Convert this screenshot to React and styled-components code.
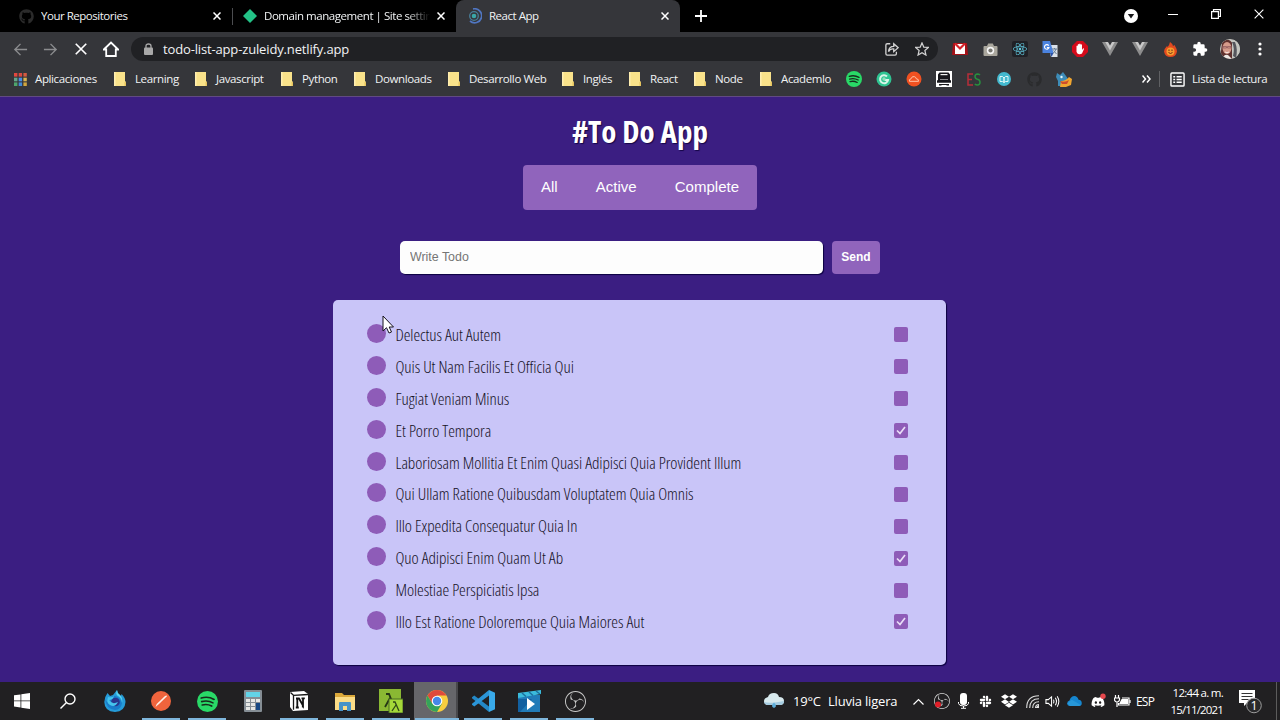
import React from "react";
import styled, { createGlobalStyle, css } from "styled-components";
import { FaGithub, FaReact, FaSlack, FaDropbox, FaDiscord } from "react-icons/fa6";
import { SiObsstudio } from "react-icons/si";

const Global = createGlobalStyle`
  * { box-sizing: border-box; }
  html, body { margin: 0; padding: 0; overflow: hidden; }
  body { font-family: "Open Sans", "Noto Sans", sans-serif; }
  svg { display: block; flex: none; }
`;

const Screen = styled.div`
  width: 1280px;
  height: 720px;
  display: flex;
  flex-direction: column;
  overflow: hidden;
  color: #fff;
`;

/* ---------- browser chrome ---------- */
const TabStrip = styled.div`
  height: 32px;
  flex: none;
  display: flex;
  background: #000;
`;

const Tab = styled.div`
  width: ${(p) => p.$w}px;
  height: 32px;
  display: flex;
  align-items: center;
  padding: 0 11px 0 ${(p) => p.$pad}px;
  gap: 7px;
  ${(p) =>
    p.$active &&
    css`
      background: #35363a;
      border-radius: 8px 8px 0 0;
    `}
`;

const TabTitle = styled.span`
  flex: 1;
  font-size: 11.5px;
  letter-spacing: ${(p) => (p.$fade ? -0.45 : -0.48)}px;
  line-height: 16px;
  white-space: nowrap;
  overflow: hidden;
  color: #f1f3f4;
  ${(p) => p.$fade && css`
    mask-image: linear-gradient(90deg, #000 86%, transparent);
  `}
`;

const TabDivider = styled.div`
  width: 1px;
  height: 17px;
  margin-top: 8px;
  background: #4c4d50;
`;

const NewTab = styled.div`
  width: 42px;
  display: grid;
  place-items: center;
`;

const WindowButtons = styled.div`
  margin-left: auto;
  display: flex;
  height: 27px;
`;

const WindowButton = styled.div`
  width: ${(p) => p.$w || 43}px;
  padding-top: ${(p) => p.$top || 0}px;
  display: grid;
  place-items: center;
`;

const Toolbar = styled.div`
  height: 33px;
  flex: none;
  display: flex;
  align-items: center;
  background: #35363a;
  padding: 1px 0 0 5px;
`;

const Slot = styled.div`
  width: ${(p) => p.$w || 30}px;
  height: 28px;
  margin-left: ${(p) => p.$ml || 0}px;
  flex: none;
  display: grid;
  place-items: center;
`;

const AddressBar = styled.div`
  width: 807px;
  height: 24px;
  margin: 0 7px 0 6px;
  flex: none;
  display: flex;
  align-items: center;
  border-radius: 12px;
  background: #202124;
  padding: 0 1px 0 13px;
`;

const Url = styled.span`
  flex: 1;
  margin-left: 10px;
  font-size: 13px;
  line-height: 20px;
  letter-spacing: -0.15px;
  color: #f1f3f4;
`;

const Bookmarks = styled.div`
  height: 31px;
  flex: none;
  display: flex;
  align-items: center;
  padding: 0 0 3px 14px;
  background: #35363a;
`;

const Bookmark = styled.div`
  width: ${(p) => p.$w}px;
  flex: none;
  display: flex;
  align-items: center;
  gap: ${(p) => p.$gap || 9}px;
  font-size: 11.5px;
  letter-spacing: -0.38px;
  line-height: 16px;
  white-space: nowrap;
  color: #f1f3f4;
`;

const Divider = styled.div`
  width: 1px;
  height: 16px;
  margin-right: 10px;
  background: #5f6063;
`;

/* ---------- to-do page ---------- */
const Page = styled.main`
  height: 586px;
  flex: none;
  display: flex;
  flex-direction: column;
  align-items: center;
  background: #3b1e82;
  border-top: 1px solid #614a83;
`;

const Title = styled.h1`
  margin: 12px 0 0;
  height: 44px;
  font-family: "Open Sans", sans-serif;
  font-size: 31px;
  line-height: 44px;
  font-weight: 700;
  font-stretch: 75%;
  letter-spacing: 0.1px;
  text-shadow: 1px 1px 1px #150647;
  white-space: nowrap;
`;

const Filters = styled.nav`
  width: 234px;
  height: 45px;
  margin-top: 12px;
  padding: 0 18px 2px;
  display: flex;
  align-items: center;
  justify-content: space-between;
  border-radius: 4px;
  background: #9064bc;
  font: 15px "Liberation Sans", Arial, sans-serif;
`;

const Form = styled.div`
  width: 480px;
  height: 33px;
  margin-top: 31px;
  display: flex;
  gap: 9px;
`;

const Field = styled.input`
  width: 423px;
  height: 33px;
  padding: 0 10px 1px;
  border: 0;
  border-radius: 5px;
  background: #fdfdfd;
  box-shadow: 1px 1px 1px #0c0040;
  font: 12.4px "Liberation Sans", Arial, sans-serif;
  &::placeholder { color: #757575; opacity: 1; }
`;

const Send = styled.button`
  width: 48px;
  height: 33px;
  padding: 0 0 1px;
  border: 0;
  border-radius: 4px;
  background: #9064bc;
  color: #fff;
  font: bold 12px "Liberation Sans", Arial, sans-serif;
`;

const List = styled.ul`
  width: 613px;
  height: 365px;
  margin: 26px 1px 0 0;
  padding: 19px 38px 0 34px;
  list-style: none;
  border-radius: 5px;
  background: #c9c5f8;
  box-shadow: 1px 1px 1px #0c0040;
`;

const Item = styled.li`
  height: 31.9px;
  display: flex;
  align-items: center;
  font-family: "Open Sans", sans-serif;
  font-size: 17px;
  font-stretch: 75%;
  font-weight: 300;
  letter-spacing: -0.08px;
  color: #161226;
  white-space: nowrap;
`;

const Dot = styled.span`
  width: 19px;
  height: 19px;
  margin: 0 9.5px 3px 0;
  border-radius: 50%;
  background: #8e5cb8;
`;

const Task = styled.span`
  flex: 1;
  line-height: 24px;
`;

const Check = styled.span`
  width: 14px;
  height: 15px;
  display: grid;
  place-items: center;
  border-radius: 2px;
  background: #8e5cb8;
`;

const Pointer = styled.svg`
  position: absolute;
  left: 382px;
  top: 315px;
`;

/* ---------- taskbar ---------- */
const Taskbar = styled.footer`
  height: 38px;
  flex: none;
  display: flex;
  background: #212022;
`;

const StartArea = styled.div`
  width: 92px;
  height: 38px;
  padding-left: 14px;
  display: flex;
  align-items: center;
  gap: 30px;
`;

const AppButton = styled.div`
  width: 46px;
  height: 38px;
  display: flex;
  flex-direction: column;
  align-items: center;
  justify-content: space-between;
  padding-top: 7px;
  ${(p) => p.$active && css`
    background: linear-gradient(90deg, #66666a 0 42px, #48484b 42px 44px, transparent 44px);
  `}
`;

const Glyph = styled.div`
  height: 24px;
  display: grid;
  place-items: center;
`;

const Underline = styled.div`
  width: ${(p) => (p.$wide ? 44 : 38)}px;
  height: 2px;
  background: #7fb6dc;
  visibility: ${(p) => (p.$on ? "visible" : "hidden")};
`;

const Tray = styled.div`
  margin-left: auto;
  display: flex;
  align-items: center;
`;

const TrayText = styled.span`
  width: ${(p) => p.$w}px;
  font-size: ${(p) => p.$size || 13}px;
  letter-spacing: ${(p) => p.$ls || 0}px;
  white-space: nowrap;
`;

const Clock = styled.div`
  width: 60px;
  font-size: 11.5px;
  line-height: 17px;
  letter-spacing: ${(p) => p.$ls}px;
  text-align: right;
  white-space: nowrap;
`;

const ShowDesktop = styled.div`
  width: 4px;
  height: 38px;
  border-left: 1px solid #5c5c5c;
`;

/* ---------- icons ---------- */
const Line = ({ size = 16, w = 1.5, color = "#fff", children }) => (
  <svg width={size} height={size} viewBox="0 0 16 16" fill="none" stroke={color} strokeWidth={w}>
    {children}
  </svg>
);
const Cross = ({ size = 8, w = 1.5 }) => (
  <svg width={size} height={size} viewBox="0 0 8 8" stroke="#fff" strokeWidth={w}>
    <path d="M.5.5 7.5 7.5M7.5.5.5 7.5" />
  </svg>
);
const Folder = () => (
  <svg width="12" height="14" viewBox="0 0 12 14">
    <path d="M0 0h11v9l1 1v4H0z" fill="#f9e28a" />
    <path d="M0 0h1.500v14H0z" fill="#ffeeb0" />
    <path d="M10.500 10h1.500v4h-1.500z" fill="#e5c35e" />
  </svg>
);
const Apps = () => (
  <svg width="13" height="13" viewBox="0 0 13 13">
    {["#e2483f", "#d94a40", "#d35a3f", "#62a78a", "#4a8ee0", "#d8b450", "#4ea56c", "#4289d6", "#d0a63e"].map((c, i) => (
      <rect key={i} x={(i % 3) * 4.7} y={Math.floor(i / 3) * 4.7} width="3.4" height="3.6" fill={c} />
    ))}
  </svg>
);
const Vue = () => (
  <svg width="16" height="14" viewBox="0 0 16 14">
    <path d="M0 0h4l4 7 4-7h4L8 14z" fill="#8d8d8d" />
    <path d="M3.200 0H6l2 3.500L10 0h2.800L8 8.500z" fill="#c9c9c9" />
  </svg>
);
const Gmail = () => (
  <svg width="16" height="14" viewBox="0 0 16 14">
    <path d="M1 1h14l1 12H0z" fill="#a51218" />
    <path d="M3 2h10v10H3z" fill="#fff" />
    <path d="M3 1.500 8 6.500l5-5" fill="none" stroke="#d8232a" strokeWidth="2.200" />
  </svg>
);
const Camera = () => (
  <svg width="15" height="13" viewBox="0 0 15 13">
    <path d="M1.500 3H4l1.200-2.500h4.600L11 3h2.500q1 0 1 1v8q0 1-1 1h-12q-1 0-1-1V4q0-1 1-1z" fill="#aaa79d" />
    <circle cx="7.500" cy="7.500" r="3.700" fill="#f5f5f5" />
    <circle cx="7.500" cy="7.500" r="2.100" fill="#77766f" />
  </svg>
);
const ReactBadge = () => (
  <svg width="16" height="16" viewBox="0 0 16 16">
    <rect width="16" height="16" rx="2" fill="#202126" />
    <FaReact x="1" y="1" size={14} color="#61c8df" />
  </svg>
);
const Translate = () => (
  <svg width="16" height="16" viewBox="0 0 16 16">
    <path d="M6 4h9.500v12H9z" fill="#dbe1e8" />
    <path d="M.5 0H8l3.500 12H.5z" fill="#4b83df" />
    <path d="M6.700 4.600a2.300 2.300 0 1 0 .3 2H4.900" fill="none" stroke="#fff" strokeWidth="1.100" />
    <path d="M10 8h5M12.500 7v1M14 8q-.8 3-3.300 4.500M11.500 9.500l3 3.500" fill="none" stroke="#667b91" />
    <path d="m8 12 1.500 4 2-4z" fill="#2951a5" />
  </svg>
);
const Adblock = () => (
  <svg width="16" height="16" viewBox="0 0 16 16">
    <path d="M5 0h6l5 5v6l-5 5H5l-5-5V5z" fill="#d50b1b" />
    <path d="M4.500 8V5q.7-.8 1.300 0V3.500q.7-.8 1.400 0V3q.7-.8 1.400 0v.7q.8-.7 1.400 0V9l1-1.500q1-.4 1 .4L10 12.500q-1 1-3 .8-2-.3-2.500-2.500z" fill="#fff" />
  </svg>
);
const Fire = () => (
  <svg width="13" height="15" viewBox="0 0 13 15">
    <path d="M6 0q3 2 3 4l1.500-1Q13 7 13 9.500 12 15 6.500 15T0 9.500Q0 7 3 4l.5 1Q5.500 3 6 0z" fill="#e1491f" />
    <circle cx="6.500" cy="9.500" r="4" fill="#f79b2e" />
    <path d="M5 7.500v1.500M8 7.500v1.500M4.500 10.500q2 2 4 0" stroke="#64301a" fill="none" />
  </svg>
);
const Puzzle = () => (
  <svg width="16" height="16" viewBox="0 0 24 24">
    <path fill="#fff" d="M20.500 11H19V7a2 2 0 0 0-2-2h-4V3.500a2.500 2.500 0 0 0-5 0V5H4a2 2 0 0 0-2 2v3.800h1.500a2.700 2.700 0 0 1 0 5.400H2V20a2 2 0 0 0 2 2h3.800v-1.500a2.700 2.700 0 0 1 5.400 0V22H17a2 2 0 0 0 2-2v-4h1.500a2.500 2.500 0 0 0 0-5z" />
  </svg>
);
const Avatar = () => (
  <svg width="20" height="20" viewBox="0 0 20 20">
    <defs><clipPath id="face"><circle cx="10" cy="10" r="10" /></clipPath></defs>
    <g clipPath="url(#face)">
      <path d="M0 0h20v20H0z" fill="#c9c8c2" />
      <path d="M2 4Q8-3 13 5v15H0z" fill="#5d312e" />
      <path d="M12 1h8v19h-8z" fill="#c4c5bf" />
      <path d="M12 3q3 6 1 14l3 2q2-9-1-16z" fill="#55565c" />
      <ellipse cx="7" cy="9" rx="4.500" ry="6" fill="#d69b8b" />
      <path d="M3 7.500h3.500v1.500H3zM7.500 7.500H11v1.500H7.500z" fill="none" stroke="#8a5357" strokeWidth=".7" />
      <path d="M5 13q2 1.500 4 0" stroke="#f5e6e0" fill="none" />
      <path d="M2 20q2-5 6-4l4 4z" fill="#ece8e4" />
    </g>
  </svg>
);
const Spotify = ({ size }) => (
  <svg width={size} height={size} viewBox="0 0 20 20">
    <circle cx="10" cy="10" r="10" fill="#29d967" />
    <path d="M4 6.700q6.500-2 12.300 1.300M4.500 10.100q5.700-1.600 10.700 1.200M5 13.300q4.800-1.300 9 1" fill="none" stroke="#182b1c" strokeWidth="1.600" strokeLinecap="round" />
  </svg>
);
const GreenG = () => (
  <svg width="16" height="16" viewBox="0 0 16 16">
    <circle cx="8" cy="8" r="7.500" fill="#2fc492" />
    <path d="M11 5.500A4 4 0 1 0 12 9H8.500" fill="none" stroke="#d9f6e9" strokeWidth="2" />
    <circle cx="8" cy="8" r="1.700" fill="#8ee2bd" />
  </svg>
);
const OrangeCloud = () => (
  <svg width="16" height="16" viewBox="0 0 16 16">
    <circle cx="8" cy="8" r="7.500" fill="#f15121" />
    <path d="M3.500 10.300q-1-2 1.500-2.500 1-3 3.500-2.100 1.500.4 1.800 2.100 2.500 0 2.200 2.500z" fill="none" stroke="#ffc7ad" />
  </svg>
);
const Robot = () => (
  <svg width="16" height="16" viewBox="0 0 16 16">
    <path d="M0 0h16v16H0z" fill="#fff" />
    <path d="M3.500 1.500h9l1.500 2V9l1 .5v2.300H1V9.500L2 9V3.500z" fill="#17171c" />
    <path d="M4.500 3h7v1.200h-7z" fill="#eee" />
    <path d="M4 8.500h8" stroke="#8a8a8e" />
    <path d="M3 13h2.500v1.500H3zM10.500 13H13v1.500h-2.500z" fill="#17171c" />
    <path d="M5 13.500h6" stroke="#17171c" />
  </svg>
);
const EsMark = () => (
  <svg width="14" height="13" viewBox="0 0 14 13" fill="none" strokeWidth="1.500">
    <path d="M6 1H1v11h5M1 6.500h4" stroke="#b62e3a" />
    <path d="M13 2Q12 1 10.500 1 8 1.200 8 3.500q0 2 2.500 2.800Q13 7 13 9.300 13 12 10.500 12 9 12 7.800 11" stroke="#288f3e" />
  </svg>
);
const BlueRound = () => (
  <svg width="14" height="14" viewBox="0 0 14 14">
    <circle cx="7" cy="7" r="7" fill="#43b9cf" />
    <path d="M3 4.500h2.500L7 6v4.500L5.500 9.500H3zM11 4.500H8.500L7 6v4.500l1.500-1H11z" stroke="#def6f6" fill="none" strokeWidth="1" />
  </svg>
);
const Bird = () => (
  <svg width="16" height="15" viewBox="0 0 16 15">
    <path d="M1 1l3 2 3-3 3 4 2 3-5 7H2V9L0 5z" fill="#3d8cb8" />
    <path d="M5 9q5 0 8-4l3 2-1 6-5 2H4z" fill="#f1a62f" />
    <path d="M4 9q5 2 9-1l-2 4H6z" fill="#cf4d2c" />
    <circle cx="5.500" cy="5" r="1.200" fill="#e5f5f6" />
  </svg>
);
const Reading = () => (
  <Line size={15} w={1.5}>
    <rect x="1" y="1" width="14" height="14" rx="1" />
    <path d="M3.500 5h2M7 5h5.500M3.500 8h2M7 8h5.500M3.500 11h2M7 11h5.500" />
  </Line>
);
const Windows = () => (
  <svg width="16" height="16" viewBox="0 0 16 16" fill="#fff">
    <path d="M0 2.300 6.500 1.400v6.100H0zM7.300 1.300 16 0v7.500H7.300zM0 8.300h6.500v6.200L0 13.600zM7.300 8.300H16V16l-8.700-1.300z" />
  </svg>
);
const Firefox = () => (
  <svg width="22" height="22" viewBox="0 0 22 22">
    <path d="M3.500 3 6 6l3-1 4-5q0 3 3 5l1 1 .5-2q4 4 4 8-.5 9.500-10.500 10Q.5 21.500.3 12 .4 7 3.500 3z" fill="#259bd9" />
    <path d="M1 9q3 6 7 3-4-2-1-5l4-1q5 1 7 7-1 7-7 7Q2 19 1 9z" fill="#197cca" />
    <path d="M13 0q0 3 3 5 3 3 2 8 0-5-4-7-3-2-1-6z" fill="#5ad4ef" />
    <circle cx="11.500" cy="12" r="4.300" fill="#29358c" />
    <path d="M4 7q4 1 6-1-1 4-5 4 3 5 9 2-3 6-8 3Q2 13 4 7z" fill="#45c4ed" />
  </svg>
);
const Postman = () => (
  <svg width="20" height="20" viewBox="0 0 20 20">
    <circle cx="10" cy="10" r="10" fill="#f0643d" />
    <path d="m4.500 16 1.200-3L14 5q2-1.200 2 .3L8 13z" fill="#fff0e8" />
  </svg>
);
const Calculator = () => (
  <svg width="18" height="22" viewBox="0 0 18 22">
    <rect width="18" height="22" rx="1" fill="#858d94" />
    <path d="M2 2h14v5H2z" fill="#62d3e8" />
    {[0, 1, 2, 3, 4, 5, 6, 7, 8].map((i) => (
      <rect key={i} x={2 + (i % 3) * 5} y={9 + Math.floor(i / 3) * 4} width="4" height="3" fill="#e6e7e5" />
    ))}
    <path d="M12 13h4v7h-4z" fill="#174783" />
  </svg>
);
const Notion = () => (
  <svg width="20" height="20" viewBox="0 0 20 20">
    <path d="m1 1 14-1 4 3v16L4 20l-3-4z" fill="#fff" />
    <path d="m1.500 1.500 3 2.800v14.500M4.500 4.300 19 3.500" fill="none" stroke="#161616" strokeWidth="1.300" />
    <path d="M7 7.500h3l4 7V7.300M8.300 7.500v9M6.800 16.500h3M12.500 7.300h3.300M13.800 14v2.500" fill="none" stroke="#111" strokeWidth="1.800" />
  </svg>
);
const Explorer = () => (
  <svg width="20" height="19" viewBox="0 0 20 19">
    <path d="M0 1h7l2 2h11v15H0z" fill="#dba83a" />
    <path d="M0 5h20v13H0z" fill="#fbdc86" />
    <path d="M4 19v-8q0-1 1-1h10q1 0 1 1v8h-4v-5H8v5z" fill="#4793c7" />
  </svg>
);
const Lambda = () => (
  <svg width="24" height="24" viewBox="0 0 24 24">
    <path d="M0 0h22v22H0z" fill="#8ab833" />
    <path d="M7 5h3l6 15M11 9 6 18" fill="none" stroke="#253715" strokeWidth="1.800" />
    <path d="M10 10h14v14H10z" fill="#a5d839" stroke="#4b6d24" />
    <path d="M14 13h2l4 9M17 16l-4 6" fill="none" stroke="#304817" strokeWidth="1.300" />
  </svg>
);
const ChromeIcon = () => (
  <svg width="22" height="22" viewBox="0 0 22 22">
    <circle cx="11" cy="11" r="11" fill="#f8cd3e" />
    <path d="M1.500 5.500A11 11 0 0 1 20.500 5.500H11L6.300 13.700z" fill="#df4a3d" />
    <path d="M1.500 5.500A11 11 0 0 0 11 22l5-8.500H6.200z" fill="#35a35b" />
    <circle cx="11" cy="11" r="5.300" fill="#fff" /><circle cx="11" cy="11" r="4.200" fill="#4688e8" />
  </svg>
);
const VsCode = () => (
  <svg width="23" height="22" viewBox="0 0 23 22">
    <path d="M0 7.300 2.300 5.500 17 16.500V22L0 8.300z" fill="#2388c7" />
    <path d="M0 14.700 2.300 16.500 17 5.500V0L0 13.700z" fill="#2b95d8" />
    <path d="m17 0 6 2.700v16.600L17 22z" fill="#39aaea" />
  </svg>
);
const Movies = () => (
  <svg width="23" height="22" viewBox="0 0 23 22">
    <path d="M0 5h22v17H0z" fill="#217bb8" />
    <path d="M0 3 23 0v4L0 8z" fill="#3bbbdc" />
    <path d="m4 3 4 3.500M11 2l4 3.500M18 1l4 3" stroke="#1b6f9e" strokeWidth="1.500" />
    <path d="M0 9h14L2 22H0z" fill="#1260a0" />
    <path d="m9 8 8 6-8 6z" fill="#fff" />
  </svg>
);
const Weather = () => (
  <svg width="20" height="16" viewBox="0 0 20 16">
    <path d="M3 12Q0 11 0 8t4-4q1-4 6-4 4 0 5 4 5 0 5 4t-4 4z" fill="#d7e9ee" />
    <path d="M0 9q6 2 20-1 0 4-4 4H3Q0 11 0 9z" fill="#a5cbe0" />
    <path d="M10 9.500q4 4 0 5.500-4-1.500 0-5.500z" fill="#5eaedb" />
  </svg>
);
const Obs = () => (
  <svg width="16" height="16" viewBox="0 0 16 16">
    <SiObsstudio size={16} color="#d5d5d5" />
    <circle cx="4" cy="11.500" r="3" fill="#e01e28" />
  </svg>
);
const Mic = () => (
  <svg width="11" height="16" viewBox="0 0 11 16">
    <rect x="2" width="7" height="12" rx="3" fill="#fff" />
    <path d="M.5 9v1.500Q1 13 5.500 13t5-2.500V9M5.500 13v2M3 15.300h5" stroke="#fff" fill="none" />
  </svg>
);
const Wifi = () => (
  <svg width="13" height="13" viewBox="0 0 13 13" fill="none" stroke="#ddd" strokeWidth="1.100">
    <path d="M.7 13Q.7.7 13 .7M3.700 13q0-9.300 9.300-9.300M6.700 13q0-6.300 6.300-6.300M9.500 13q0-3.500 3.500-3.500" />
    <path d="m10 13 3-3v3z" fill="#fff" />
  </svg>
);
const Sound = () => (
  <Line size={15} w={1.1}>
    <path d="M1 6v4h2.500L7 13V3L3.500 6z" /><path d="M9 6q1 2 0 4M11 4q2.500 4 0 8M13 2.500q3.500 5.500 0 11" />
  </Line>
);
const OneDrive = () => (
  <svg width="15" height="10" viewBox="0 0 16 11">
    <path d="M3 11Q0 11 0 8q0-2.500 2.500-3Q4 0 8 0q3 0 4.500 4Q16 4 16 8q0 3-3 3z" fill="#1686cf" />
    <path d="m0 8 5-4 10 6-2 1H3z" fill="#2797d8" />
  </svg>
);
const DiscordTray = () => (
  <svg width="16" height="16" viewBox="0 0 16 16">
    <FaDiscord size={14} y={2} color="#fff" /><circle cx="12" cy="3.300" r="2.700" fill="#e5484d" />
  </svg>
);
const Battery = () => (
  <svg width="17" height="12" viewBox="0 0 17 12" fill="none" stroke="#fff" strokeWidth="1.200">
    <path d="M8 3h7v7H4.500V8" /><path d="M8 4.500h5.500v4H6z" fill="#fff" />
    <path d="M16 5v3M1.500 0v3M4.500 0v3M.5 3h5v2Q5 7 3 7T.5 5zM3 7v5" />
  </svg>
);
const Notice = () => (
  <svg width="24" height="26" viewBox="0 0 24 26">
    <path d="M1 2h16v13H9l-3 3v-3H1z" fill="#fff" />
    <path d="M3.500 5.500h11M3.500 8.500h11M3.500 11.500h7" stroke="#353535" />
    <circle cx="16" cy="17.500" r="7.300" fill="#29292b" stroke="#9c9c9c" />
    <text x="16" y="21.800" textAnchor="middle" fontSize="12.5" fill="#fff">1</text>
  </svg>
);

const bookmarks = [
  ["Learning", 81], ["Javascript", 86], ["Python", 73], ["Downloads", 94], ["Desarrollo Web", 114],
  ["Inglés", 67], ["React", 65], ["Node", 66], ["Academlo", 79],
];

const todos = [
  ["Delectus Aut Autem"], ["Quis Ut Nam Facilis Et Officia Qui"], ["Fugiat Veniam Minus"],
  ["Et Porro Tempora", true], ["Laboriosam Mollitia Et Enim Quasi Adipisci Quia Provident Illum"],
  ["Qui Ullam Ratione Quibusdam Voluptatem Quia Omnis"], ["Illo Expedita Consequatur Quia In"],
  ["Quo Adipisci Enim Quam Ut Ab", true], ["Molestiae Perspiciatis Ipsa"],
  ["Illo Est Ratione Doloremque Quia Maiores Aut", true],
];

const extensions = [Gmail, Camera, ReactBadge, Translate, Adblock, Vue, Vue, Fire, Puzzle, Avatar];
const sites = [() => <Spotify size={16} />, GreenG, OrangeCloud, Robot, EsMark, BlueRound, () => <FaGithub size={15} color="#2a2b2d" />, Bird];
const apps = [
  [Firefox], [Postman, 1], [() => <Spotify size={21} />, 1], [Calculator], [Notion, 1], [Explorer, 1],
  [Lambda, 1], [ChromeIcon, 2], [VsCode, 1], [Movies, 1], [() => <SiObsstudio size={21} color="#c9c9c9" />, 1],
];

export default function App() {
  return (
    <Screen>
      <Global />
      <TabStrip>
        <Tab $w={232} $pad={19}>
          <FaGithub size={15} color="#2b2b2b" />
          <TabTitle>Your Repositories</TabTitle>
          <Cross />
        </Tab>
        <TabDivider />
        <Tab $w={223} $pad={10}>
          <svg width="14" height="14" viewBox="0 0 14 14"><path d="m7 0 7 7-7 7-7-7z" fill="#23c286" /></svg>
          <TabTitle $fade>Domain management | Site settin</TabTitle>
          <Cross />
        </Tab>
        <Tab $active $w={224} $pad={12}>
          <svg width="14" height="16" viewBox="0 0 14 16" fill="none">
            <path d="M5 1a7 7 0 1 1-3 12" stroke="#5076c2" strokeWidth="1.700" />
            <circle cx="6" cy="8" r="4.300" stroke="#487d99" strokeWidth="1.300" /><circle cx="6" cy="8" r="2.300" fill="#3aa6a8" />
          </svg>
          <TabTitle>React App</TabTitle>
          <Cross />
        </Tab>
        <NewTab><svg width="12" height="12" viewBox="0 0 12 12"><path d="M6 0v12M0 6h12" stroke="#fff" strokeWidth="1.800" /></svg></NewTab>
        <WindowButtons>
          <WindowButton $w={40} $top={4}>
            <svg width="14" height="14" viewBox="0 0 14 14"><circle cx="7" cy="7" r="7" fill="#fff" /><path d="M3.800 5h6.400L7 9.500z" fill="#17171a" /></svg>
          </WindowButton>
          <WindowButton><svg width="10" height="10" viewBox="0 0 10 10"><path d="M0 5.500h10" stroke="#fff" /></svg></WindowButton>
          <WindowButton><svg width="10" height="10" viewBox="0 0 10 10" fill="none" stroke="#fff" strokeWidth="1.200"><path d="M.6 2.600h6.800v6.800H.6zM2.500 2.500V.6h6.900v6.900H7.500" /></svg></WindowButton>
          <WindowButton><Cross size={10} w={0.9} /></WindowButton>
        </WindowButtons>
      </TabStrip>
      <Toolbar>
        <Slot><Line size={15} color="#8b8c8e"><path d="M15 8H2M8 2 2 8l6 6" /></Line></Slot>
        <Slot><Line size={15} color="#8b8c8e"><path d="M1 8h13M8 2l6 6-6 6" /></Line></Slot>
        <Slot $w={31}><Cross size={12} w={1.1} /></Slot>
        <Slot $w={29}><Line w={1.8}><path d="M.8 8.500 8 1.500l7.200 7H12.800V15H3.200V8.500z" /></Line></Slot>
        <AddressBar>
          <svg width="9" height="12" viewBox="0 0 9 12"><path d="M2 5V3q0-2 2.500-2T7 3v2" fill="none" stroke="#a8a8a8" strokeWidth="1.300" /><rect y="4.500" width="9" height="7.500" rx="1" fill="#a8a8a8" /></svg>
          <Url>todo-list-app-zuleidy.netlify.app</Url>
          <Slot><Line size={14} color="#d2d2d2"><path d="M6 2H2.500Q1 2 1 3.500v10Q1 15 2.500 15h9q1.500 0 1.500-1.500V11M4 11q.5-6 6-6V2l5 4.500L10 11V8Q6 7.500 4 11z" /></Line></Slot>
          <Slot><Line size={14} color="#d2d2d2" w={1.4}><path d="m8 1 2 4.800 5.300.4-4 3.500 1.200 5.200L8 12.200l-4.500 2.700 1.200-5.200-4-3.500 5.300-.4z" /></Line></Slot>
        </AddressBar>
        {extensions.map((Icon, i) => <Slot key={i}><Icon /></Slot>)}
        <Slot><svg width="4" height="14" viewBox="0 0 4 14" fill="#fff"><circle cx="2" cy="2" r="1.600" /><circle cx="2" cy="7" r="1.600" /><circle cx="2" cy="12" r="1.600" /></svg></Slot>
      </Toolbar>
      <Bookmarks>
        <Bookmark $w={100} $gap={8}><Apps />Aplicaciones</Bookmark>
        {bookmarks.map(([name, w]) => <Bookmark key={name} $w={w}><Folder />{name}</Bookmark>)}
        {sites.map((Icon, i) => <Slot key={i}><Icon /></Slot>)}
        <Slot $w={26} $ml={54}>
          <svg width="9" height="8" viewBox="0 0 9 8" fill="none" stroke="#fff" strokeWidth="1.500"><path d="m.5.5 3 3.500-3 3.500M5 .5 8 4 5 7.500" /></svg>
        </Slot>
        <Divider />
        <Bookmark $w={98} $gap={7}><Reading />Lista de lectura</Bookmark>
      </Bookmarks>
      <Page>
        <Title>#To Do App</Title>
        <Filters><span>All</span><span>Active</span><span>Complete</span></Filters>
        <Form><Field placeholder="Write Todo" /><Send>Send</Send></Form>
        <List>
          {todos.map(([name, done]) => (
            <Item key={name}>
              <Dot />
              <Task>{name}</Task>
              <Check>{done && <svg width="10" height="9" viewBox="0 0 10 9"><path d="m1 4.500 3 3L9 1" fill="none" stroke="#e9def7" strokeWidth="1.700" /></svg>}</Check>
            </Item>
          ))}
        </List>
      </Page>
      <Taskbar>
        <StartArea>
          <Windows />
          <Line size={16} w={1.4}><circle cx="10" cy="6" r="5" /><path d="M6.500 9.500.5 15.500" /></Line>
        </StartArea>
        {apps.map(([Icon, state], i) => (
          <AppButton key={i} $active={state === 2}>
            <Glyph><Icon /></Glyph>
            <Underline $on={state} $wide={state === 2} />
          </AppButton>
        ))}
        <Tray>
          <Slot $w={20}><Weather /></Slot>
          <Slot $w={9} />
          <TrayText $w={35} $ls={-0.2}>19°C</TrayText>
          <TrayText $w={78} $ls={-0.2}>Lluvia ligera</TrayText>
          <Slot $w={25}><svg width="11" height="7" viewBox="0 0 11 7"><path d="m.5 6.500 5-5 5 5" fill="none" stroke="#fff" strokeWidth="1.200" /></svg></Slot>
          <Slot $w={21}><Obs /></Slot>
          <Slot $w={22}><Mic /></Slot>
          <Slot $w={23}><FaSlack size={13} /></Slot>
          <Slot $w={23}><FaDropbox size={16} /></Slot>
          <Slot $w={24}><Wifi /></Slot>
          <Slot $w={16}><Sound /></Slot>
          <Slot $w={29}><OneDrive /></Slot>
          <Slot $w={19}><DiscordTray /></Slot>
          <Slot $w={28}><Battery /></Slot>
          <TrayText $w={27} $size={12} $ls={-0.8}>ESP</TrayText>
          <div>
            <Clock $ls={-0.72}>12:44 a. m.</Clock>
            <Clock $ls={-0.85}>15/11/2021</Clock>
          </div>
          <Slot $w={53}><Notice /></Slot>
          <ShowDesktop />
        </Tray>
      </Taskbar>
      <Pointer width="12" height="19" viewBox="0 0 12 19"><path d="M1 1v15l3.500-3.300L7 18l2.500-1-2.300-5H11.500z" fill="#fff" stroke="#17121f" /></Pointer>
    </Screen>
  );
}
